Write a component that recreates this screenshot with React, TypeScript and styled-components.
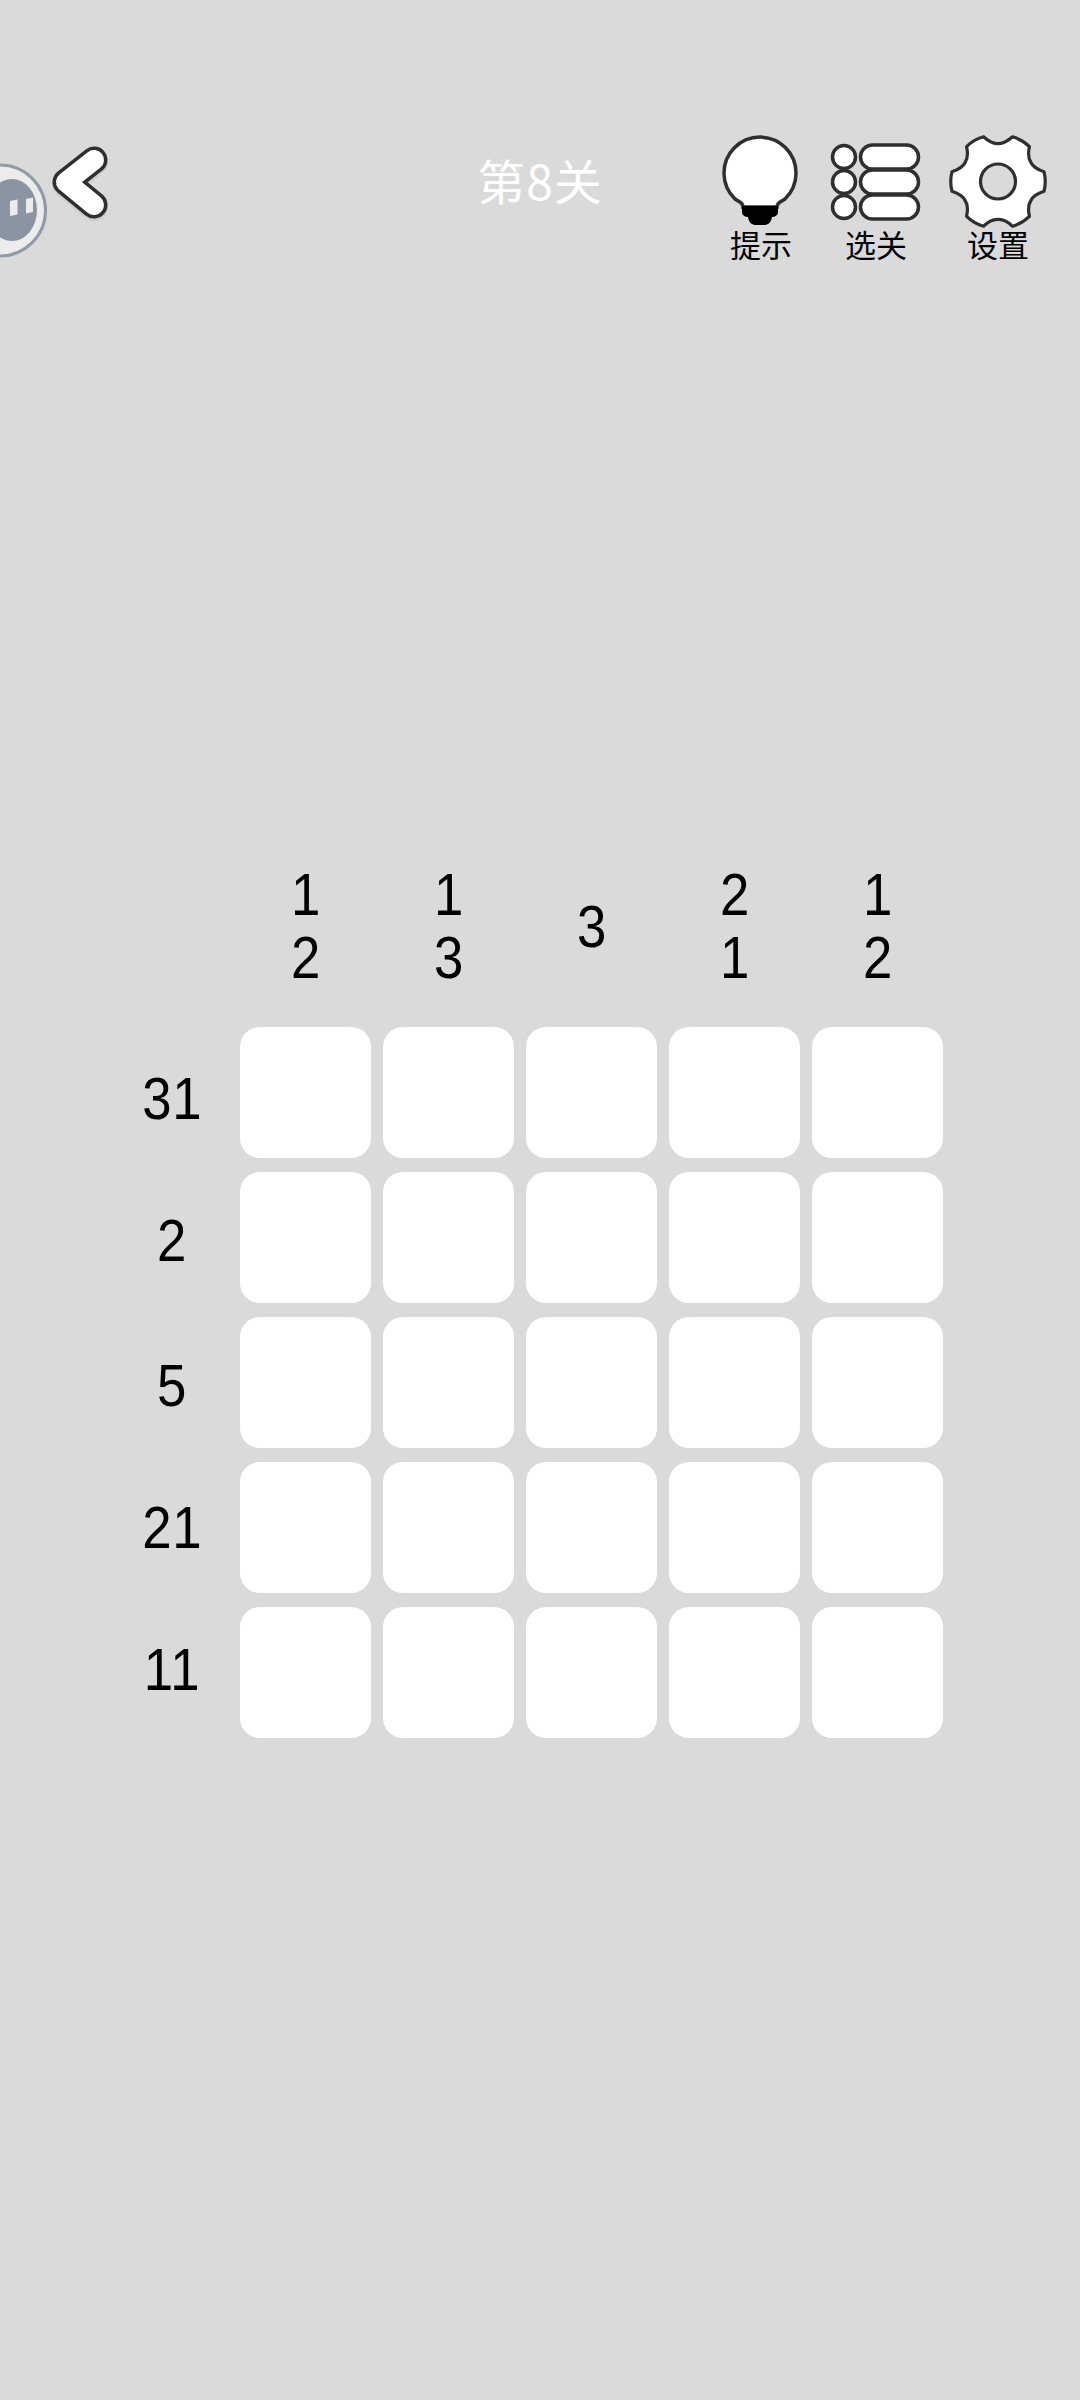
import React from "react";
import styled, { createGlobalStyle } from "styled-components";

const Global = createGlobalStyle`
  html, body { margin: 0; padding: 0; background: #dadada; }
  body { font-family: "Liberation Sans", "Noto Sans CJK SC", sans-serif; }
`;

const Page = styled.div`
  width: 1080px;
  height: 2400px;
  background: #dadada;
  position: relative;
  overflow: hidden;
`;

const Header = styled.header`
  height: 270px;
  padding: 136px 0 0 52px;
  box-sizing: border-box;
  display: flex;
  align-items: flex-start;
`;

const Back = styled.svg`
  width: 60px;
  height: 80px;
  flex: none;
  margin-top: 6px;
  overflow: visible;
`;

const Title = styled.h1`
  position: absolute;
  left: 0;
  right: 0;
  top: 149px;
  margin: 0;
  text-align: center;
  color: #fff;
  letter-spacing: 1px;
  font: 400 48px/60px "Noto Sans CJK SC", sans-serif;
`;

const Tools = styled.div`
  margin-left: auto;
  display: flex;
  padding-right: 32px;
`;

const Tool = styled.div<{ $gap: number }>`
  width: 100px;
  margin-right: ${(p) => p.$gap}px;
  display: flex;
  flex-direction: column;
  align-items: center;
`;

const ToolIcon = styled.svg`
  width: 100px;
  height: 92px;
  display: block;
  overflow: visible;
`;

const ToolLabel = styled.span`
  font: 400 31px/36px "Noto Sans CJK SC", sans-serif;
  color: #000;
  margin-top: -2px;
  white-space: nowrap;
`;

const Puzzle = styled.main`
  margin: 593px 0 0 120px;
  display: grid;
  grid-template-columns: 108px repeat(5, 131px);
  column-gap: 12px;
  row-gap: 14px;
`;

const Corner = styled.div``;

const ColClue = styled.div`
  height: 126px;
  margin-bottom: 24px;
  padding-left: 2px;
  display: flex;
  flex-direction: column;
  justify-content: center;
  align-items: center;
`;

const Digit = styled.span`
  font: 400 60px/63px "Liberation Sans", sans-serif;
  letter-spacing: 1px;
  color: #000;
  transform: scaleX(0.88);
`;

const RowClue = styled.div<{ $top: number }>`
  display: flex;
  align-items: flex-start;
  justify-content: center;
  padding: ${(p) => p.$top}px 3px 0 0;
  box-sizing: border-box;
  height: 131px;
`;

const Cell = styled.div`
  height: 131px;
  background: #fff;
  border-radius: 20px;
`;

const Float = styled.svg`
  position: absolute;
  left: 0;
  top: 162px;
  width: 48px;
  height: 97px;
`;

const cols = [["1", "2"], ["1", "3"], ["3"], ["2", "1"], ["1", "2"]];
const rows = [
  { clue: "31", top: 40 },
  { clue: "2", top: 37 },
  { clue: "5", top: 37 },
  { clue: "21", top: 34 },
  { clue: "11", top: 31 },
];

const INK = "#2f2f2f";

const gearPath = (() => {
  const cx = 50;
  const cy = 45.5;
  const pt = (r: number, deg: number) => {
    const a = (deg * Math.PI) / 180;
    return `${(cx + r * Math.cos(a)).toFixed(1)} ${(cy + r * Math.sin(a)).toFixed(1)}`;
  };
  let d = "";
  for (let i = 0; i < 6; i++) {
    const t = i * 60;
    d += `${i === 0 ? "M" : "L"}${pt(47, t - 12)} Q${pt(48.5, t)} ${pt(47, t + 12)} `;
    d += `C${pt(42, t + 16)} ${pt(38, t + 21)} ${pt(38, t + 30)} C${pt(38, t + 39)} ${pt(42, t + 44)} ${pt(47, t + 48)} `;
  }
  return d + "Z";
})();

export default function App() {
  return (
    <Page>
      <Global />
      <Float viewBox="0 0 48 97">
        <circle cx="0" cy="48.5" r="45.5" fill="#ececec" stroke="#929aa6" strokeWidth="3" />
        <ellipse cx="12" cy="48" rx="25" ry="31" fill="#8a94a3" />
        <path d="M10 39l7.5-1.5v15l-7.5 1.5z M26 37l7-1.5v14.5l-7 1.5z" fill="#ececec" />
      </Float>
      <Header>
        <Back viewBox="0 0 60 80">
          <path d="M42 20 L14 42 L42 65" fill="none" stroke="#bdbdbd" strokeWidth="28" strokeLinecap="round" strokeLinejoin="round" opacity="0.5" />
          <path d="M42 18 L14 40 L42 63" fill="none" stroke={INK} strokeWidth="27" strokeLinecap="round" strokeLinejoin="round" />
          <path d="M42 18 L14 40 L42 63" fill="none" stroke="#fff" strokeWidth="20" strokeLinecap="round" strokeLinejoin="round" />
        </Back>
        <Title>第8关</Title>
        <Tools>
          <Tool $gap={15}>
            <ToolIcon viewBox="0 0 100 92">
              <path
                d="M32 71 C32 66 28 66 24 63 A36 36 0 1 1 74 63 C70 66 66 66 66 71 Z"
                fill="#fff"
                stroke={INK}
                strokeWidth="3.5"
              />
              <path
                d="M31 70 H67 V76 C67 80 63 81 61 81 C60 87 57 89 53 89 H45 C41 89 38 87 37 81 C35 81 31 80 31 76 Z"
                fill="#000"
              />
            </ToolIcon>
            <ToolLabel>提示</ToolLabel>
          </Tool>
          <Tool $gap={22}>
            <ToolIcon viewBox="0 0 100 92">
              {[21, 46, 71].map((y) => (
                <g key={y} fill="#fff" stroke={INK} strokeWidth="3.5">
                  <circle cx="18" cy={y} r="11.5" />
                  <rect x="34.5" y={y - 12} width="58" height="24" rx="12" />
                </g>
              ))}
            </ToolIcon>
            <ToolLabel>选关</ToolLabel>
          </Tool>
          <Tool $gap={0}>
            <ToolIcon viewBox="0 0 100 92">
              <path d={gearPath} fill="#fff" stroke={INK} strokeWidth="3.2" strokeLinejoin="round" />
              <circle cx="50" cy="45.5" r="17.5" fill="#dadada" stroke={INK} strokeWidth="3.2" />
            </ToolIcon>
            <ToolLabel>设置</ToolLabel>
          </Tool>
        </Tools>
      </Header>
      <Puzzle>
        <Corner />
        {cols.map((c, i) => (
          <ColClue key={i}>
            {c.map((d, j) => (
              <Digit key={j}>{d}</Digit>
            ))}
          </ColClue>
        ))}
        {rows.map((r, i) => (
          <React.Fragment key={i}>
            <RowClue $top={r.top}>
              <Digit>{r.clue}</Digit>
            </RowClue>
            {[0, 1, 2, 3, 4].map((k) => (
              <Cell key={k} />
            ))}
          </React.Fragment>
        ))}
      </Puzzle>
    </Page>
  );
}
